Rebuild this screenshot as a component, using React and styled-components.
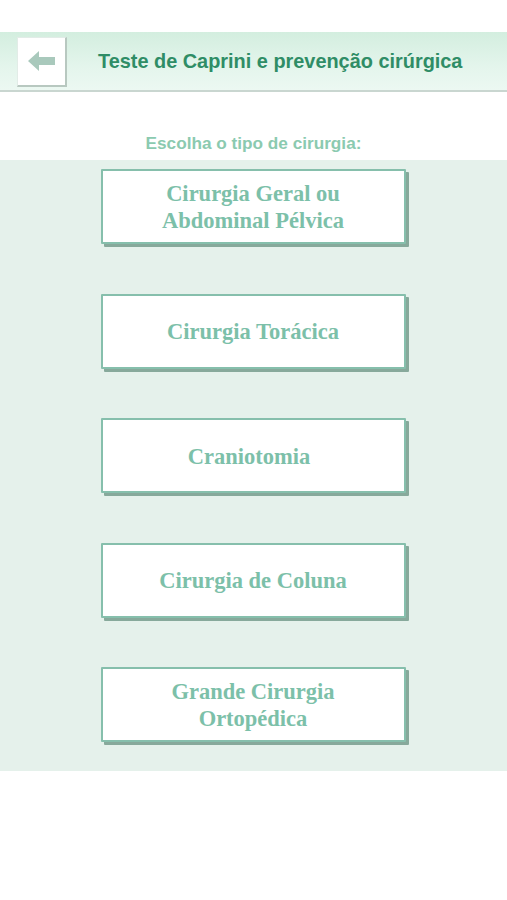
import React from 'react';
import styled, { createGlobalStyle } from 'styled-components';

const GlobalStyle = createGlobalStyle`
  body {
    margin: 0;
    background: #ffffff;
    font-family: "Liberation Sans", Arial, sans-serif;
  }
`;

const Page = styled.div`
  width: 507px;
  min-height: 900px;
  padding-top: 32px;
  box-sizing: border-box;
`;

const Header = styled.div`
  height: 60px;
  display: flex;
  align-items: center;
  padding-left: 17px;
  box-sizing: border-box;
  background: linear-gradient(to bottom, #d3eedf 0%, #e4f5ec 60%, #ecf8f2 100%);
  border-bottom: 2px solid #c9d6d0;
`;

const BackButton = styled.button`
  width: 50px;
  height: 50px;
  padding: 0;
  margin-top: 1px;
  background: #ffffff;
  border: 1px solid #e2ece7;
  border-right: 2px solid #b8c8c0;
  border-bottom: 2px solid #b8c8c0;
  display: flex;
  align-items: center;
  justify-content: center;
`;

const Title = styled.h1`
  margin: 0 0 0 31px;
  font-size: 19.9px;
  font-weight: bold;
  color: #2f8d66;
`;

const Prompt = styled.p`
  margin: 0;
  height: 68px;
  padding-top: 41px;
  box-sizing: border-box;
  text-align: center;
  font-size: 17.2px;
  font-weight: bold;
  color: #8bcab0;
`;

const Panel = styled.div`
  background: #e5f1eb;
  padding: 9px 0 29px;
  display: flex;
  flex-direction: column;
  align-items: center;
  gap: 49.5px;
`;

const Choice = styled.button`
  width: 305px;
  height: 75px;
  margin-left: -1px;
  background: #ffffff;
  border: 2px solid #86bfac;
  border-radius: 1px;
  box-shadow: 3px 3px 0 #87a99b;
  display: flex;
  align-items: center;
  justify-content: center;
  padding: 1px ${p => p.$pad || 0}px 0 0;
  font-family: "Liberation Serif", "Times New Roman", serif;
  font-weight: bold;
  font-size: 22.5px;
  line-height: 27px;
  color: #7cc0a9;
  text-align: center;
`;

const ArrowIcon = () => (
  <svg width="28" height="20" viewBox="0 0 28 20">
    <path d="M0 10 L11 0 L11 6 L27 6 L27 14 L11 14 L11 20 Z" fill="#a9c9bc" />
  </svg>
);

const options = [
  { label: ['Cirurgia Geral ou', 'Abdominal Pélvica'], pad: 0 },
  { label: ['Cirurgia Torácica'], pad: 0 },
  { label: ['Craniotomia'], pad: 8 },
  { label: ['Cirurgia de Coluna'], pad: 0 },
  { label: ['Grande Cirurgia', 'Ortopédica'], pad: 0 },
];

export default function App() {
  return (
    <Page>
      <GlobalStyle />
      <Header>
        <BackButton aria-label="Voltar">
          <ArrowIcon />
        </BackButton>
        <Title>Teste de Caprini e prevenção cirúrgica</Title>
      </Header>
      <Prompt>Escolha o tipo de cirurgia:</Prompt>
      <Panel>
        {options.map((o, i) => (
          <Choice key={i} $pad={o.pad}>
            <span>
              {o.label.map((l, j) => (
                <React.Fragment key={j}>
                  {j > 0 && <br />}
                  {l}
                </React.Fragment>
              ))}
            </span>
          </Choice>
        ))}
      </Panel>
    </Page>
  );
}
